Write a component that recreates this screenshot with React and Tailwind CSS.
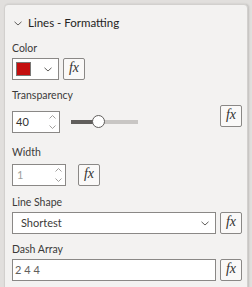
import React from "react";

function Fx({ className = "" }) {
  return (
    <div
      className={
        "flex h-[22px] w-[22px] shrink-0 items-center justify-center rounded-[2px] border border-[#8a8886] bg-[#faf9f8] text-[14px] leading-none text-[#323130] " +
        className
      }
      style={{ fontFamily: '"Liberation Serif", serif', fontStyle: "italic" }}
    >
      <span className="-mt-[2px]">fx</span>
    </div>
  );
}

function Chevron({ className = "" }) {
  return (
    <svg className={className} width="8" height="5" viewBox="0 0 8 5" fill="none">
      <path d="M0.5 0.8l3.5 3.2L7.5 0.8" stroke="#605e5c" strokeWidth="1" />
    </svg>
  );
}

function Spinner() {
  return (
    <div className="flex flex-col items-center gap-[6px] pr-[3px]">
      <svg width="7" height="4" viewBox="0 0 7 4" fill="none">
        <path d="M0.5 3.5L3.5 0.5L6.5 3.5" stroke="#a19f9d" strokeWidth="1" />
      </svg>
      <svg width="7" height="4" viewBox="0 0 7 4" fill="none">
        <path d="M0.5 0.5L3.5 3.5L6.5 0.5" stroke="#a19f9d" strokeWidth="1" />
      </svg>
    </div>
  );
}

function Label({ children, className = "" }) {
  return <div className={"h-[16px] text-[10.5px] leading-[16px] text-[#3b3a39] " + className}>{children}</div>;
}

export default function App() {
  return (
    <div
      className="h-[287px] w-[252px] overflow-hidden bg-[#e1dfdd] pl-[4px] pt-[4px]"
      style={{ fontFamily: 'Lato, "Open Sans", sans-serif' }}
    >
      <div className="flex h-[290px] w-[244px] flex-col rounded-tl-[4px] rounded-tr-[4px] border border-[#d2d0ce] bg-[#f3f2f1] pl-[7px] pr-[5px] shadow-[1px_0_2px_rgba(0,0,0,0.15)]">
        <div className="mt-[9px] flex h-[18px] items-center gap-[6px] pl-[2px]">
          <Chevron />
          <span className="text-[11.5px] leading-[18px] text-[#252423]">Lines - Formatting</span>
        </div>

        <Label className="mt-[8px]">Color</Label>
        <div className="mt-[2px] flex items-center gap-[4px]">
          <div className="flex h-[22px] w-[47px] items-center justify-between border border-[#8a8886] bg-white pl-[3px] pr-[6px]">
            <div className="h-[14px] w-[15px] border border-[#797775] bg-[#c40f0f]" />
            <Chevron />
          </div>
          <Fx />
        </div>

        <Label className="mt-[7px]">Transparency</Label>
        <div className="flex items-start">
          <div className="mt-[8px] flex h-[22px] w-[48px] items-center justify-between border border-[#8a8886] bg-white pl-[3px]">
            <span className="text-[11px] text-[#323130]">40</span>
            <Spinner />
          </div>
          <div className="relative ml-[11px] mt-[17px] flex h-[4px] w-[67px] items-center">
            <div className="h-[4px] w-[22px] bg-[#605e5c]" />
            <div className="h-[4px] flex-1 bg-[#c8c6c4]" />
            <div className="absolute left-[21px] top-[-5px] h-[13px] w-[13px] rounded-full border border-[#605e5c] bg-white" />
          </div>
          <Fx className="ml-auto mt-[2px]" />
        </div>

        <Label className="mt-[11px]">Width</Label>
        <div className="mt-[4px] flex items-center gap-[12px]">
          <div className="flex h-[22px] w-[54px] items-center justify-between border border-[#8a8886] bg-white pl-[4px]">
            <span className="text-[11px] text-[#a19f9d]">1</span>
            <Spinner />
          </div>
          <Fx />
        </div>

        <Label className="mt-[8px]">Line Shape</Label>
        <div className="mt-[2px] flex items-center gap-[4px]">
          <div className="flex h-[22px] w-[204px] items-center justify-between border border-[#8a8886] bg-white pl-[8px] pr-[6px]">
            <span className="text-[11px] text-[#3b3a39]">Shortest</span>
            <Chevron />
          </div>
          <Fx />
        </div>

        <Label className="mt-[7px]">Dash Array</Label>
        <div className="mt-[2px] flex items-center gap-[4px]">
          <div className="flex h-[22px] w-[204px] items-center border border-[#8a8886] bg-white pl-[2px]">
            <span className="text-[11px] text-[#605e5c]">2 4 4</span>
          </div>
          <Fx />
        </div>
      </div>
    </div>
  );
}
